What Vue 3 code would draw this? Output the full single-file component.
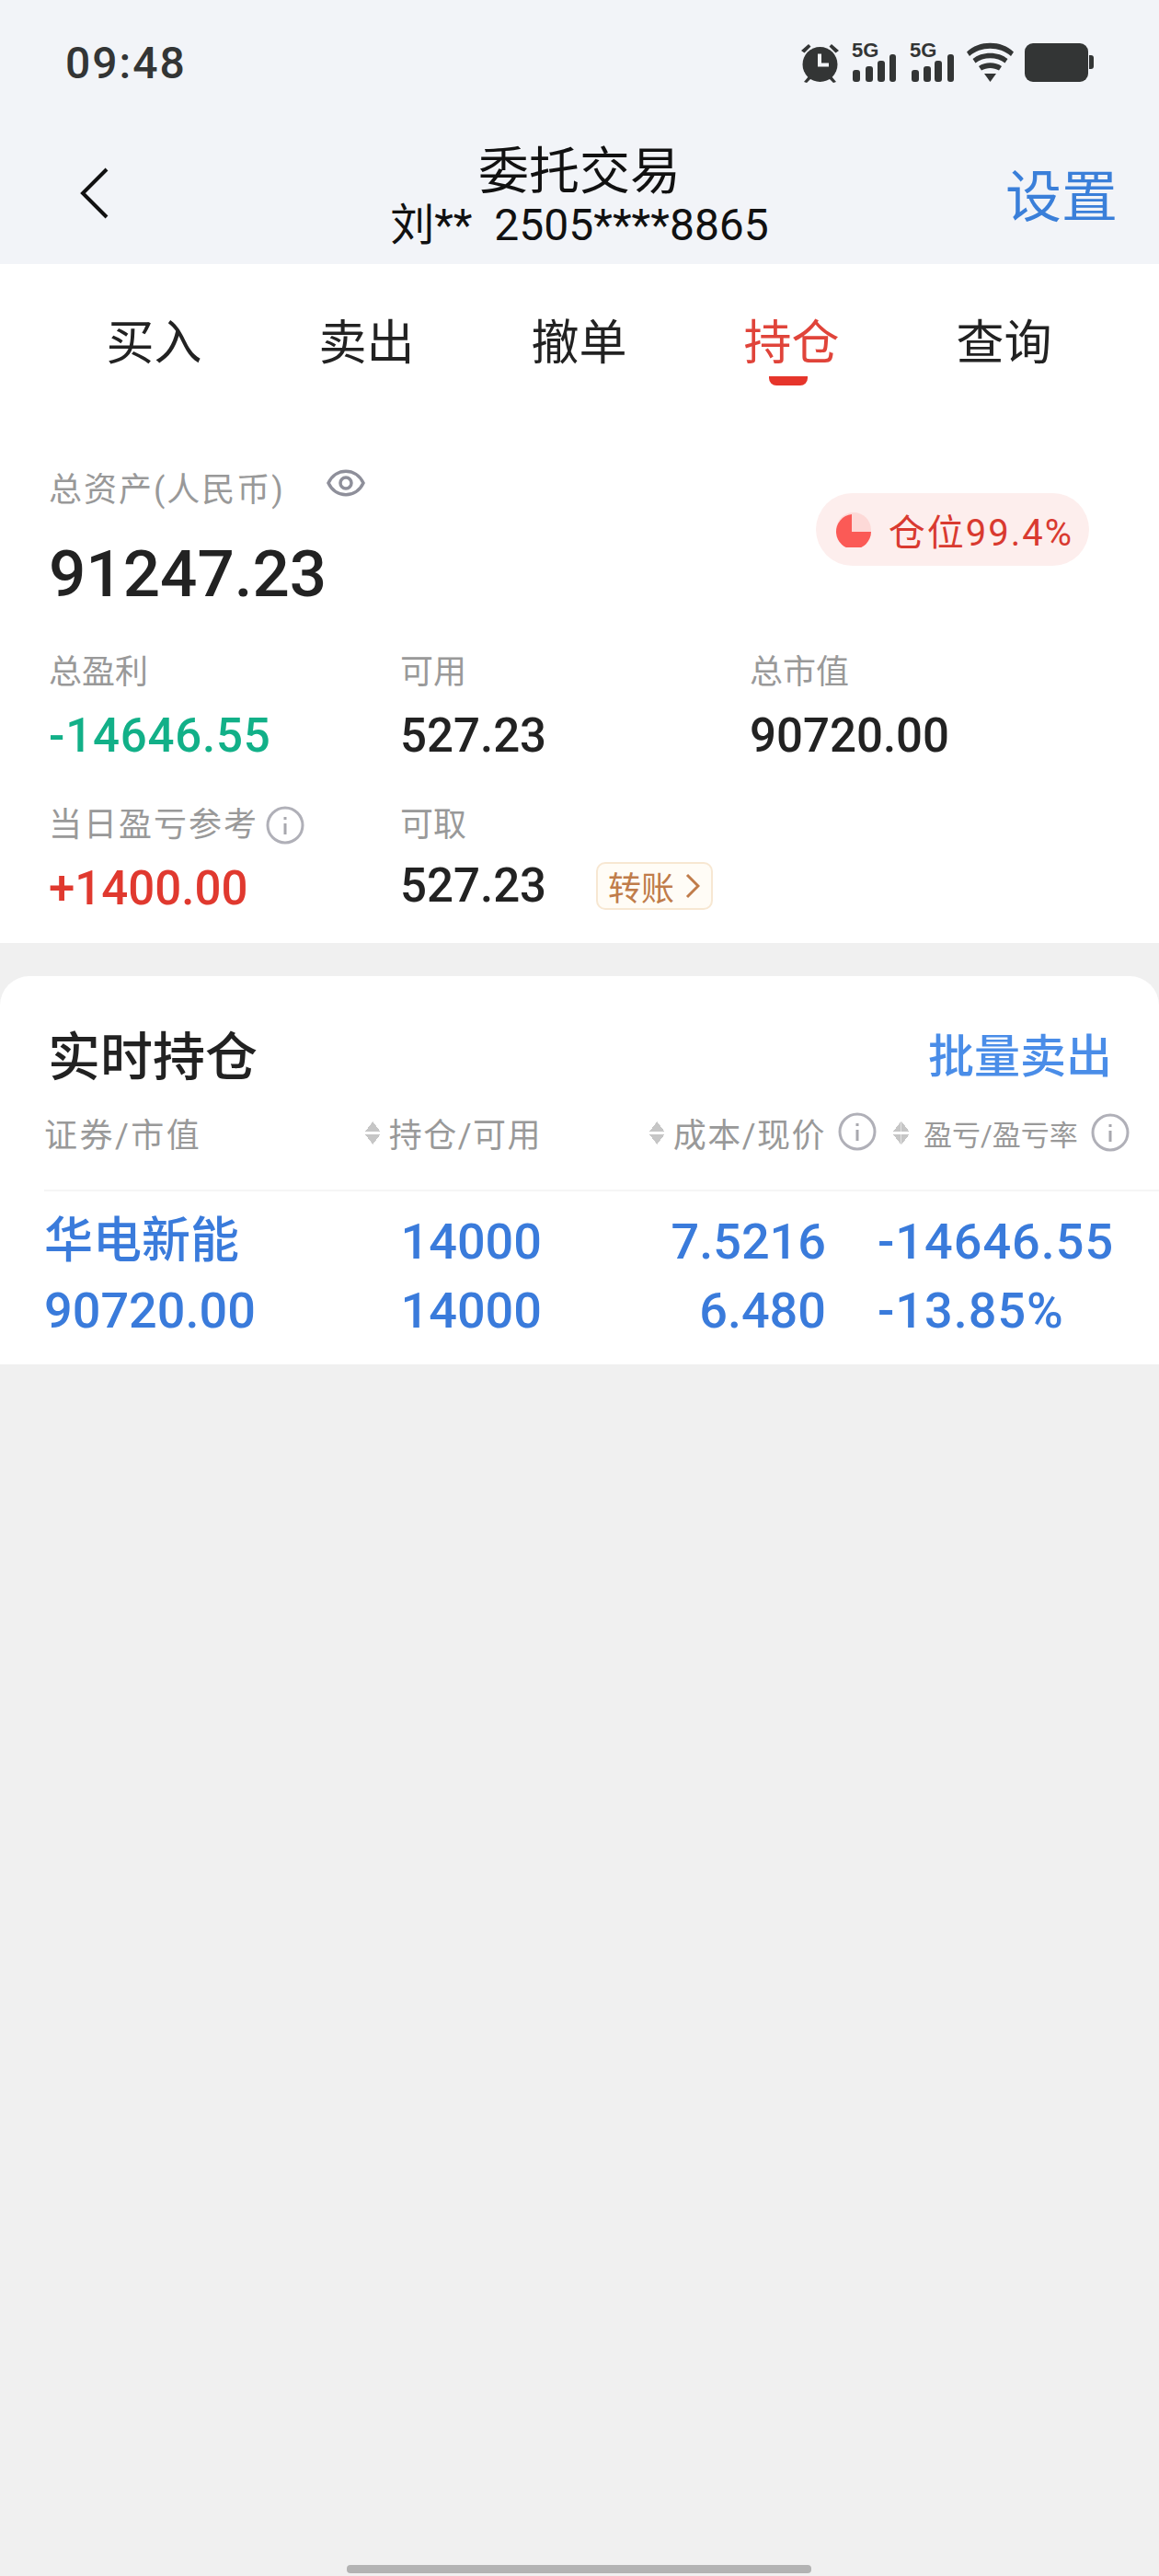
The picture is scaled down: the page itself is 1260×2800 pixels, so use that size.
<template>
  <div class="phone">
    <header class="top">
      <div class="status">
        <span class="time">09:48</span>
        <svg class="status-icons" width="320" height="44" viewBox="0 0 320 44">
          <g fill="#333535">
            <!-- alarm -->
            <circle cx="21.5" cy="24" r="19" />
            <path d="M1 9 9 2l2.500 2.500-7 7zM42 9 34 2l-2.500 2.500 7 7z" />
            <path d="M4 43l5-6 3 2-5 5zM39 43l-5-6-3 2 5 5z" />
            <!-- signal -->
            <rect x="57" y="30" width="8" height="13" rx="3" />
            <rect x="71" y="26" width="8" height="17" rx="3" />
            <rect x="84" y="20" width="8" height="23" rx="3" />
            <rect x="97" y="13" width="7" height="30" rx="3" />
            <rect x="121" y="30" width="8" height="13" rx="3" />
            <rect x="134" y="26" width="8" height="17" rx="3" />
            <rect x="146" y="20" width="8" height="23" rx="3" />
            <rect x="160" y="13" width="7" height="30" rx="3" />
            <!-- wifi -->
            <path d="M181 10.500C194 -2.500 219 -2.500 232 10.500L229 15C217 4 196 4 184 15Z" />
            <path d="M187.500 18C197 9.500 216 9.500 225.500 18L222.500 22.500C214 15.500 199 15.500 190.500 22.500Z" />
            <path d="M194 26C201 21 212 21 219 26L216 30.500C210 27 203 27 197 30.500Z" />
            <path d="M200 34H213L206.500 43Z" />
            <!-- battery -->
            <rect x="244" y="1" width="69" height="42" rx="9" />
            <path d="M314 14h2a3 3 0 0 1 3 3v9a3 3 0 0 1-3 3h-2z" />
          </g>
          <path d="M21 12.500V24.500H31" fill="none" stroke="#f2f4f8" stroke-width="4" />
        </svg>
        <span class="net net-a">5G</span>
        <span class="net net-b">5G</span>
      </div>
      <div class="nav">
        <svg class="back" width="32" height="56" viewBox="0 0 32 56">
          <path d="M29 2 3 28l26 26" fill="none" stroke="#111" stroke-width="4" />
        </svg>
        <div class="nav-title">
          <div class="title">委托交易</div>
          <div class="account">刘**&nbsp;&nbsp;2505****8865</div>
        </div>
        <span class="setting">设置</span>
      </div>
    </header>

    <section class="summary">
      <nav class="tabs">
        <div v-for="tab in tabs" :key="tab" class="tab" :class="{ active: tab === '持仓' }">{{ tab }}</div>
      </nav>

      <div class="total-row">
        <div>
          <div class="total-label">
            <span class="label wide">总资产(人民币)</span>
            <svg class="eye" width="42" height="32" viewBox="0 0 42 32">
              <path d="M2 16C10 -1 32 -1 40 16C32 33 10 33 2 16Z" fill="none" stroke="#8e8f9a" stroke-width="3.500" />
              <circle cx="21" cy="16" r="6" fill="none" stroke="#8e8f9a" stroke-width="3.500" />
            </svg>
          </div>
          <div class="total">91247.23</div>
        </div>
        <div class="position">
          <svg width="38" height="38" viewBox="0 0 38 38">
            <circle cx="19" cy="19" r="19" fill="#fdd9d7" />
            <path d="M17 2A19 19 0 1 0 38 21H17Z" fill="#fb5a56" />
          </svg>
          <span>仓位99.4%</span>
        </div>
      </div>

      <div class="stats">
        <div class="stat">
          <div class="label">总盈利</div>
          <div class="value green">-14646.55</div>
        </div>
        <div class="stat">
          <div class="label">可用</div>
          <div class="value">527.23</div>
        </div>
        <div class="stat">
          <div class="label">总市值</div>
          <div class="value">90720.00</div>
        </div>
        <div class="stat">
          <div class="label with-info">当日盈亏参考
            <svg class="info" width="42" height="42" viewBox="0 0 42 42">
              <circle cx="21" cy="21" r="19" fill="none" stroke="#b0b0b8" stroke-width="3" />
              <path d="M21 12v3M21 19v12" stroke="#a8a8ae" stroke-width="3" />
            </svg>
          </div>
          <div class="value red">+1400.00</div>
        </div>
        <div class="stat stat-wide">
          <div class="label">可取</div>
          <div class="value-row">
            <div class="value">527.23</div>
            <span class="transfer">转账
              <svg width="16" height="28" viewBox="0 0 16 28">
                <path d="M2 2l12 12L2 26" fill="none" stroke="#c07c4a" stroke-width="3" />
              </svg>
            </span>
          </div>
        </div>
      </div>
    </section>

    <section class="holdings">
      <div class="holdings-head">
        <h2>实时持仓</h2>
        <span class="batch">批量卖出</span>
      </div>

      <div class="thead">
        <div class="th th-first">证券/市值</div>
        <div class="th th-right"><i class="sort" />持仓/可用</div>
        <div class="th th-right th-cost">
          <i class="sort" />成本/现价
          <svg class="info info-abs" width="42" height="42" viewBox="0 0 42 42">
            <circle cx="21" cy="21" r="19" fill="none" stroke="#b0b0b8" stroke-width="3" />
            <path d="M21 12v3M21 19v12" stroke="#a8a8ae" stroke-width="3" />
          </svg>
        </div>
        <div class="th th-last">
          <i class="sort" /><span class="small">盈亏/盈亏率</span>
          <svg class="info" width="42" height="42" viewBox="0 0 42 42">
            <circle cx="21" cy="21" r="19" fill="none" stroke="#b0b0b8" stroke-width="3" />
            <path d="M21 12v3M21 19v12" stroke="#a8a8ae" stroke-width="3" />
          </svg>
        </div>
      </div>

      <div v-for="row in rows" :key="row.name" class="row">
        <div class="cell"><div class="name">{{ row.name }}</div><div>{{ row.value }}</div></div>
        <div class="cell right"><div>{{ row.hold }}</div><div>{{ row.free }}</div></div>
        <div class="cell right"><div>{{ row.cost }}</div><div>{{ row.price }}</div></div>
        <div class="cell last"><div>{{ row.pl }}</div><div>{{ row.rate }}</div></div>
      </div>
    </section>

    <div class="home-bar" />
  </div>
</template>

<script setup>
const tabs = ['买入', '卖出', '撤单', '持仓', '查询']

const rows = [
  {
    name: '华电新能',
    value: '90720.00',
    hold: '14000',
    free: '14000',
    cost: '7.5216',
    price: '6.480',
    pl: '-14646.55',
    rate: '-13.85%',
  },
]
</script>

<style>
html,
body {
  margin: 0;
  background: #f0f0f0;
}
</style>

<style scoped>
.phone {
  position: relative;
  width: 1260px;
  height: 2800px;
  background: #f0f0f0;
  overflow: hidden;
  font-family: Roboto, "Noto Sans CJK SC", sans-serif;
  color: #222;
}

.top {
  height: 287px;
  background: #f2f4f8;
  box-sizing: border-box;
  padding-top: 46px;
}

.status {
  position: relative;
  display: flex;
  justify-content: space-between;
  align-items: center;
  height: 44px;
  padding: 0 70px 0 71px;
}

.time {
  font-size: 48px;
  font-weight: 500;
  letter-spacing: 2px;
  color: #333535;
}

.net {
  position: absolute;
  top: -3px;
  font-size: 22px;
  line-height: 24px;
  font-weight: 700;
  color: #333535;
  font-family: "Liberation Sans", sans-serif;
}

.net-a {
  left: 926px;
}

.net-b {
  left: 989px;
}

.nav {
  position: relative;
  height: 130px;
  margin-top: 61px;
}

.back {
  position: absolute;
  left: 87px;
  top: 31px;
}

.nav-title {
  text-align: center;
}

.title {
  font-size: 55px;
  line-height: 70px;
  color: #111;
}

.account {
  font-size: 48px;
  line-height: 54px;
  color: #111;
  margin-top: -3px;
}

.setting {
  position: absolute;
  right: 45px;
  top: 29px;
  font-size: 61px;
  line-height: 70px;
  color: #3a7fd9;
}

.summary {
  height: 738px;
  background: #fff;
  box-sizing: border-box;
  padding: 0 53px;
}

.tabs {
  display: grid;
  grid-template-columns: repeat(5, 231px);
  margin-left: -1px;
  height: 131px;
}

.tab {
  position: relative;
  text-align: center;
  font-size: 52px;
  line-height: 68px;
  padding-top: 53px;
  color: #222;
}

.tab.active {
  color: #e0443a;
}

.tab.active::after {
  content: "";
  position: absolute;
  left: 50%;
  top: 122px;
  width: 42px;
  height: 10px;
  margin-left: -25px;
  background: #e6352b;
  border-radius: 0 0 8px 8px;
}

.total-row {
  display: flex;
  justify-content: space-between;
  align-items: center;
  padding-right: 23px;
  margin-top: 90px;
}

.total-label {
  display: flex;
  align-items: flex-start;
  gap: 45px;
  height: 50px;
}

.label {
  font-size: 36px;
  line-height: 50px;
  color: #999;
}

.wide {
  letter-spacing: 2px;
}

.eye {
  margin-top: 1px;
}

.total {
  font-size: 71px;
  line-height: 86px;
  font-weight: 500;
  margin-top: 23px;
  color: #222;
}

.position {
  display: flex;
  align-items: center;
  gap: 19px;
  height: 79px;
  padding: 0 17px 0 22px;
  margin-top: -24px;
  background: #fdeeed;
  border-radius: 40px;
  font-size: 40px;
  letter-spacing: 2px;
  color: #d93a30;
}

.stats {
  display: grid;
  grid-template-columns: 382px 380px 1fr;
  row-gap: 42px;
  margin-top: 39px;
}

.stat-wide {
  grid-column: span 2;
}

.with-info {
  display: flex;
  align-items: center;
  gap: 8px;
  letter-spacing: 2px;
}

.value {
  font-size: 51px;
  line-height: 60px;
  font-weight: 500;
  margin-top: 14px;
  color: #222;
}

.value.green {
  color: #12b088;
  letter-spacing: 0.800px;
}

.value.red {
  color: #e0392f;
  margin-top: 14px;
}

.stat-wide .value {
  margin-top: 11px;
}

.value-row {
  display: flex;
  align-items: center;
  gap: 54px;
}

.transfer {
  display: flex;
  align-items: center;
  gap: 12px;
  width: 127px;
  height: 52px;
  box-sizing: border-box;
  margin-top: 11px;
  padding-left: 11px;
  font-size: 36px;
  color: #c07c4a;
  background: #fffcf6;
  border: 2px solid #f7e7d2;
  border-radius: 10px;
}

.holdings {
  height: 422px;
  margin-top: 36px;
  background: #fff;
  border-radius: 32px 32px 0 0;
  box-sizing: border-box;
}

.holdings-head {
  display: flex;
  justify-content: space-between;
  align-items: center;
  height: 80px;
  padding: 43px 51px 0 52px;
}

h2 {
  margin: 0;
  font-size: 57px;
  font-weight: 500;
  color: #222;
}

.batch {
  font-size: 50px;
  font-weight: 500;
  color: #4a8de8;
}

.thead,
.row {
  display: grid;
  grid-template-columns: 292px 249px 309px 1fr;
  margin-left: 48px;
}

.thead {
  align-items: center;
  height: 68px;
  margin-top: 13px;
  padding-bottom: 28px;
  border-bottom: 2px solid #f5f5f5;
}

.th {
  position: relative;
  display: flex;
  align-items: center;
  font-size: 36px;
  letter-spacing: 1.500px;
  color: #999;
}

.th-first {
  letter-spacing: 2.500px;
}

.th-right {
  justify-content: flex-end;
}

.th-cost .info-abs {
  position: absolute;
  left: 322px;
  top: 4px;
}

.th-last {
  padding-left: 73px;
}

.small {
  font-size: 31px;
  letter-spacing: 0;
}

.sort {
  display: block;
  width: 17px;
  height: 25px;
  margin-right: 9px;
  background:
    linear-gradient(to bottom right, transparent 49%, #c6c6c6 50%) 0 0 / 50% 11px no-repeat,
    linear-gradient(to bottom left, transparent 49%, #c6c6c6 50%) 100% 0 / 50% 11px no-repeat,
    linear-gradient(to top right, transparent 49%, #c6c6c6 50%) 0 100% / 50% 11px no-repeat,
    linear-gradient(to top left, transparent 49%, #c6c6c6 50%) 100% 100% / 50% 11px no-repeat;
}

.th-last .sort {
  margin-right: 16px;
}

.th-last .info {
  margin-left: 14px;
}

.row {
  padding-top: 17px;
  font-size: 54px;
  font-weight: 500;
  line-height: 75px;
  color: #3a7bdb;
}

.name {
  font-size: 53px;
}

.right {
  text-align: right;
  padding-right: 0;
}

.last {
  padding-left: 56px;
  letter-spacing: 1px;
}

.home-bar {
  position: absolute;
  left: 377px;
  top: 2788px;
  width: 505px;
  height: 9px;
  border-radius: 4px;
  background: #b3b3b3;
}
</style>
